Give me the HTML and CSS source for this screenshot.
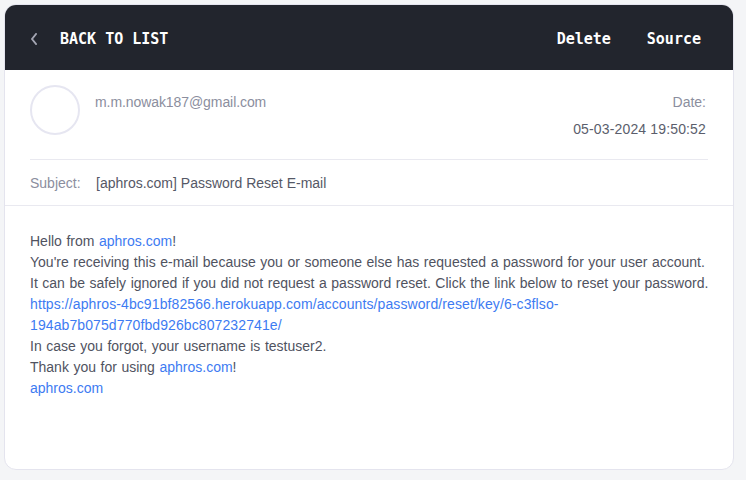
FILE: index.html
```html
<!DOCTYPE html>
<html>
<head>
<meta charset="utf-8">
<link rel="stylesheet" href="styles.css">
</head>
<body>
<div class="card">
  <div class="topbar">
    <a class="back">
      <svg class="chev" width="8" height="12" viewBox="0 0 8 12"><polyline points="6,1 2,6 6,11" fill="none" stroke="#a3a5b2" stroke-width="2" stroke-linecap="round" stroke-linejoin="round"/></svg>
      <span>BACK TO LIST</span>
    </a>
    <div class="actions">
      <a>Delete</a>
      <a>Source</a>
    </div>
  </div>
  <div class="meta">
    <div class="from-row">
      <div class="avatar"></div>
      <div class="from">m.m.nowak187@gmail.com</div>
      <div class="date">
        <div class="date-label">Date:</div>
        <div class="date-value">05-03-2024 19:50:52</div>
      </div>
    </div>
    <div class="subject-row">
      <span class="subject-label">Subject:</span>
      <span class="subject-value">[aphros.com] Password Reset E-mail</span>
    </div>
  </div>
  <div class="body">
    Hello from <a>aphros.com</a>!<br>
    You're receiving this e-mail because you or someone else has requested a password for your user account.<br>
    It can be safely ignored if you did not request a password reset. Click the link below to reset your password.<br>
    <a class="url">https://aphros-4bc91bf82566.herokuapp.com/accounts/password/reset/key/6-c3flso-<br>194ab7b075d770fbd926bc807232741e/</a><br>
    In case you forgot, your username is testuser2.<br>
    Thank you for using <a>aphros.com</a>!<br>
    <a>aphros.com</a>
  </div>
</div>
</body>
</html>
```
FILE: styles.css
```css
html, body {
  margin: 0;
  padding: 0;
  background: #f4f5f7;
}
body {
  padding: 4px 12px 10px 4px;
  font-family: "Liberation Sans", Arial, sans-serif;
  font-size: 14px;
}
.card {
  width: 728px;
  height: 464px;
  background: #fff;
  border: 1px solid #e4e4ee;
  border-radius: 12px;
  overflow: hidden;
  display: flex;
  flex-direction: column;
}
.topbar {
  height: 65px;
  flex: none;
  background: #22252d;
  display: flex;
  align-items: center;
  justify-content: space-between;
  padding: 2px 33px 0 25px;
  box-sizing: border-box;
  font-family: "DejaVu Sans Mono", "Liberation Mono", monospace;
  font-weight: bold;
  font-size: 15px;
  color: #fff;
}
.back {
  display: flex;
  align-items: center;
}
.chev {
  margin-right: 22px;
}
.actions {
  display: flex;
  gap: 37px;
  margin-right: -1px;
}
.actions a:first-child {
  margin-right: -1px;
}
.meta {
  padding: 15px 25px 0;
}
.from-row {
  display: flex;
  align-items: flex-start;
  padding-bottom: 20px;
  border-bottom: 1px solid #e9e9f0;
}
.avatar {
  width: 50px;
  height: 50px;
  box-sizing: border-box;
  border: 2px solid #e6e6f1;
  border-radius: 50%;
  flex: none;
}
.from {
  margin-left: 15px;
  margin-top: 7px;
  line-height: 20px;
  color: #8b8e9e;
  flex: 1;
  letter-spacing: -0.08px;
}
.date {
  margin-top: 7px;
  text-align: right;
  line-height: 20px;
  margin-right: 2px;
}
.date-label {
  color: #8b8e9e;
}
.date-value {
  margin-top: 7px;
  color: #5b5e6c;
  letter-spacing: 0.15px;
}
.subject-row {
  height: 45px;
  display: flex;
  align-items: center;
  padding-top: 1px;
  box-sizing: border-box;
}
.subject-label {
  color: #8b8e9e;
  width: 66px;
}
.subject-value {
  color: #555866;
}
.body {
  border-top: 1px solid #e9e9f0;
  padding: 25px 12px 25px 25px;
  line-height: 21px;
  color: #50535f;
  word-spacing: 0.65px;
}
.body a {
  color: #3d7bf2;
}
.body .url {
  letter-spacing: 0.1px;
}
```
